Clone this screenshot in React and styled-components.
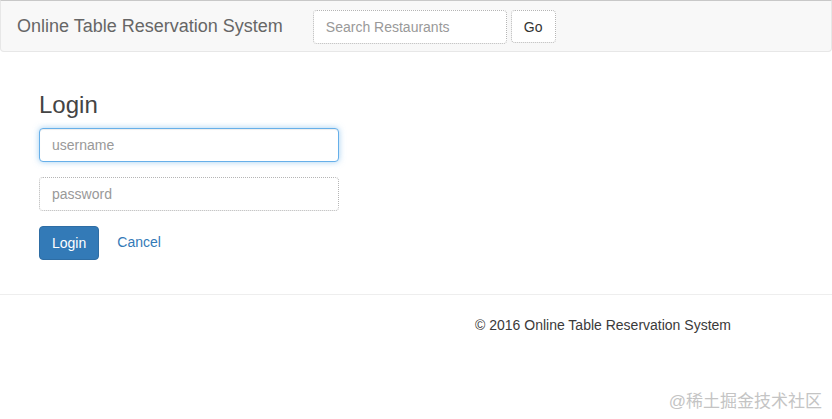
import styled, { createGlobalStyle } from 'styled-components';

const GlobalStyle = createGlobalStyle`
    html, body {
        margin: 0;
        padding: 0;
        background: #fff;
        font-family: "Liberation Sans", Arial, sans-serif;
        font-size: 14px;
        line-height: 1.42857;
        color: #333;
    }
    * { box-sizing: border-box; }
`;

export default function App() {
    return <Page>
        <GlobalStyle />
        <Navbar>
            <Brand>Online Table Reservation System</Brand>
            <SearchForm onSubmit={e => e.preventDefault()}>
                <Field dotted width="194px" placeholder="Search Restaurants" />
                <Button>Go</Button>
            </SearchForm>
        </Navbar>
        <Main>
            <Title>Login</Title>
            <Form onSubmit={e => e.preventDefault()}>
                <Group><Field focused width="300px" placeholder="username" /></Group>
                <Group><Field dotted width="300px" type="password" placeholder="password" /></Group>
                <Actions>
                    <Button primary>Login</Button>
                    <LinkButton href="#">Cancel</LinkButton>
                </Actions>
            </Form>
        </Main>
        <Rule />
        <Footer>© 2016 Online Table Reservation System</Footer>
        <Watermark>@稀土掘金技术社区</Watermark>
    </Page>
}

const Page = styled.div`
    position: relative;
    min-height: 419px;
`;

const Navbar = styled.nav`
    display: flex;
    align-items: center;
    height: 52px;
    background: #f8f8f8;
    border: 1px solid #e7e7e7;
    border-top-color: #c8c8c8;
    border-radius: 0 0 4px 4px;
    padding: 0 15px 0 16px;
`;

const Brand = styled.span`
    font-size: 18px;
    line-height: 20px;
    color: #666;
    margin-top: -1px;
`;

const SearchForm = styled.form`
    display: flex;
    align-items: center;
    gap: 4px;
    margin-left: 30px;
    margin-top: 1px;
`;

const Field = styled.input`
    display: block;
    width: ${p => p.width};
    height: 34px;
    padding: 6px 12px;
    font-family: inherit;
    font-size: 14px;
    color: #555;
    background: #fff;
    border: 1px ${p => p.dotted ? 'dotted #b5b5b5' : 'solid #ccc'};
    border-radius: 4px;
    outline: none;
    ${p => p.focused && `
        border-color: #66afe9;
        box-shadow: inset 0 1px 1px rgba(0,0,0,.075), 0 0 6px rgba(102,175,233,.6);
    `}

    &::placeholder { color: #999; }
`;

const Button = styled.button`
    height: ${p => p.primary ? '34px' : '33px'};
    padding: 6px 12px;
    font-family: inherit;
    font-size: 14px;
    border-radius: 4px;
    cursor: pointer;
    color: ${p => p.primary ? '#fff' : '#333'};
    background: ${p => p.primary ? '#337ab7' : '#fff'};
    border: 1px ${p => p.primary ? 'solid #2e6da4' : 'dotted #b5b5b5'};
`;

const Main = styled.main`
    padding: 20px 39px 14px;
`;

const Title = styled.h3`
    margin: 20px 0 10px;
    font-size: 24px;
    font-weight: 500;
    line-height: 1.1;
    color: #444;
`;

const Form = styled.form`
    margin: 0;
`;

const Group = styled.div`
    margin-bottom: 15px;
`;

const Actions = styled.div`
    display: flex;
    align-items: center;
    gap: 6px;
`;

const LinkButton = styled.a`
    padding: 6px 12px;
    color: #337ab7;
    text-decoration: none;
`;

const Rule = styled.hr`
    margin: 20px 0;
    border: 0;
    border-top: 1px solid #eee;
`;

const Footer = styled.footer`
    padding-left: 475px;
    line-height: 20px;
    color: #3a3a3a;
`;

const Watermark = styled.div`
    position: absolute;
    right: 10px;
    bottom: 5px;
    font-family: "Liberation Sans", "Noto Sans CJK SC", sans-serif;
    font-size: 17px;
    color: #c4c4c4;
`;
